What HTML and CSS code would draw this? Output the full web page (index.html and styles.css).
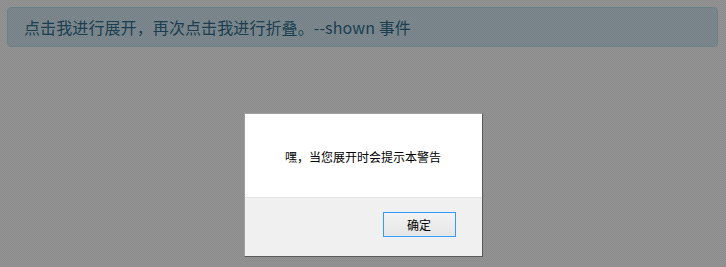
FILE: index.html
```html
<!DOCTYPE html>
<html lang="zh">
<head>
<meta charset="utf-8">
<title>Alert shown</title>
<link rel="stylesheet" href="styles.css">
</head>
<body>
<div class="page">
  <div class="alert">点击我进行展开，再次点击我进行折叠。--shown 事件</div>
</div>
<div class="overlay">
  <div class="dialog">
    <div class="dialog-body">嘿，当您展开时会提示本警告</div>
    <div class="dialog-footer"><button class="btn">确定</button></div>
  </div>
</div>
</body>
</html>
```
FILE: styles.css
```css
html, body {
  margin: 0;
  padding: 0;
  background: #fff;
  font-family: "Noto Sans CJK SC", "Liberation Sans", sans-serif;
}
.page {
  padding: 7px 8px 0 7px;
}
.alert {
  background: #d9edf7;
  border: 1px solid #bce8f1;
  border-radius: 4px;
  color: #31708f;
  font-size: 16px;
  letter-spacing: 0.1px;
  line-height: 22px;
  padding: 8px 15px 8px 16px;
}
.overlay {
  position: fixed;
  inset: 0;
  background: repeating-conic-gradient(rgba(0,0,0,0.42) 0 25%, rgba(0,0,0,0.455) 0 50%);
  background-size: 2px 2px;
  display: flex;
  justify-content: center;
  align-items: flex-start;
  padding-top: 113px;
}
.dialog {
  border: 1px solid #a0a0a0;
  border-right-color: #5a5a5a;
  border-bottom-color: #5a5a5a;
  background: #fff;
  box-sizing: border-box;
  width: 239px;
}
.dialog-body {
  height: 84px;
  display: flex;
  align-items: center;
  justify-content: center;
  font-size: 12px;
  color: #000;
  padding-top: 2px;
  box-sizing: border-box;
  border-bottom: 1px solid #e4e4e4;
}
.dialog-footer {
  background: #f0f0f0;
  height: 58px;
  display: flex;
  justify-content: flex-end;
  align-items: flex-start;
  padding: 14px 26px 0 0;
  box-sizing: border-box;
}
.btn {
  width: 73px;
  height: 25px;
  border: 1px solid #3399ff;
  background: linear-gradient(#f2f2f2, #e6e6e6);
  font-family: "Noto Sans CJK SC", sans-serif;
  font-size: 12px;
  color: #000;
  padding: 0;
  border-radius: 0;
}
```
